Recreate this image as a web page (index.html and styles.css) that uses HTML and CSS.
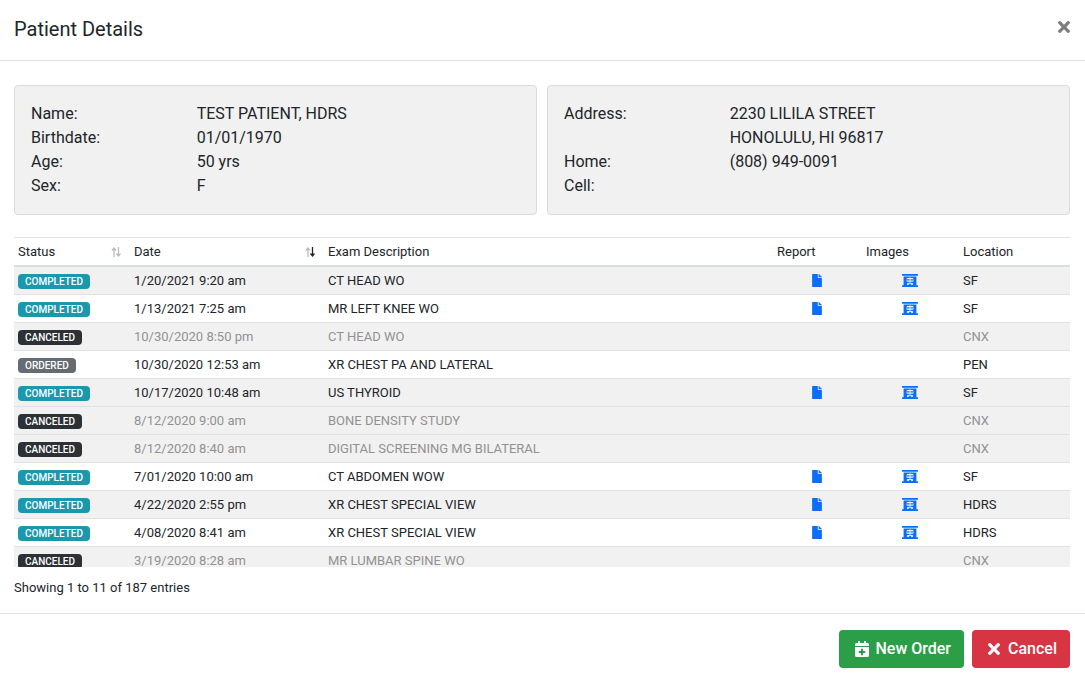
FILE: index.html
```html
<!DOCTYPE html>
<html lang="en">
<head>
<meta charset="utf-8">
<meta name="viewport" content="width=device-width, initial-scale=1">
<title>Patient Details</title>
<link rel="stylesheet" href="styles.css">
</head>
<body>
<svg class="sprite" aria-hidden="true">
  <symbol id="file" viewBox="0 0 384 512"><path d="M224 136V0H24C10.7 0 0 10.7 0 24v464c0 13.3 10.7 24 24 24h336c13.3 0 24-10.7 24-24V160H248c-13.2 0-24-10.8-24-24zm160-14.1v6.1H256V0h6.1c6.4 0 12.5 2.5 17 7l97.9 98c4.5 4.5 7 10.6 7 16.9z"/></symbol>
  <symbol id="xray" viewBox="0 0 640 512"><path d="M16 0h608c8.800 0 16 7.200 16 16v32c0 8.800-7.200 16-16 16H16C7.200 64 0 56.800 0 48V16C0 7.200 7.200 0 16 0z"/><path d="M240 384c-8.800 0-16 7.200-16 16s7.200 16 16 16 16-7.200 16-16-7.200-16-16-16zm160 32c8.800 0 16-7.200 16-16s-7.200-16-16-16-16 7.200-16 16 7.200 16 16 16zM624 448h-48V96H64v352H16c-8.800 0-16 7.200-16 16v32c0 8.800 7.200 16 16 16h608c8.800 0 16-7.200 16-16v-32c0-8.800-7.200-16-16-16zM480 248c0 4.400-3.600 8-8 8H336v32h104c4.400 0 8 3.600 8 8v16c0 4.400-3.600 8-8 8H336v32h64c26.500 0 48 21.500 48 48s-21.500 48-48 48-48-21.500-48-48v-16h-64v16c0 26.500-21.500 48-48 48s-48-21.500-48-48 21.500-48 48-48h64v-32H200c-4.400 0-8-3.600-8-8v-16c0-4.400 3.600-8 8-8h104v-32H168c-4.400 0-8-3.600-8-8v-16c0-4.400 3.600-8 8-8h136v-32H200c-4.400 0-8-3.600-8-8v-16c0-4.400 3.600-8 8-8h104v-24c0-4.400 3.600-8 8-8h16c4.400 0 8 3.600 8 8v24h104c4.400 0 8 3.600 8 8v16c0 4.400-3.600 8-8 8H336v32h136c4.400 0 8 3.600 8 8v16z" fill-rule="evenodd"/></symbol>
  <symbol id="calendar-plus" viewBox="0 0 448 512"><path d="M436 160H12c-6.600 0-12-5.400-12-12v-36c0-26.500 21.500-48 48-48h48V12c0-6.600 5.400-12 12-12h40c6.600 0 12 5.400 12 12v52h128V12c0-6.600 5.400-12 12-12h40c6.600 0 12 5.400 12 12v52h48c26.500 0 48 21.500 48 48v36c0 6.600-5.400 12-12 12zM12 192h424c6.600 0 12 5.400 12 12v260c0 26.500-21.500 48-48 48H48c-26.500 0-48-21.500-48-48V204c0-6.600 5.400-12 12-12zm316 140c0-6.600-5.400-12-12-12h-60v-60c0-6.600-5.400-12-12-12h-40c-6.600 0-12 5.400-12 12v60h-60c-6.600 0-12 5.400-12 12v40c0 6.600 5.400 12 12 12h60v60c0 6.600 5.400 12 12 12h40c6.600 0 12-5.400 12-12v-60h60c6.600 0 12-5.400 12-12v-40z"/></symbol>
  <symbol id="times" viewBox="0 0 352 512"><path d="M242.720 256l100.070-100.070c12.280-12.280 12.280-32.190 0-44.480l-22.240-22.240c-12.280-12.280-32.190-12.280-44.480 0L176 189.280 75.930 89.210c-12.280-12.280-32.190-12.280-44.480 0L9.210 111.450c-12.280 12.280-12.280 32.190 0 44.480L109.280 256 9.210 356.070c-12.280 12.280-12.280 32.190 0 44.480l22.240 22.240c12.280 12.280 32.200 12.280 44.480 0L176 322.720l100.070 100.070c12.280 12.280 32.200 12.280 44.480 0l22.240-22.240c12.280-12.280 12.280-32.190 0-44.480L242.720 256z"/></symbol>
  <symbol id="sort" viewBox="0 0 10 10"><path class="sort-up" d="M3 10V1M1 3.500 3 1l2 2.500"/><path class="sort-down" d="M7.500 0v9M5.500 6.500l2 2.500 2-2.500"/></symbol>
</svg>
<div class="modal" role="dialog" aria-labelledby="title">
  <header class="modal-header">
    <h1 id="title" class="modal-title">Patient Details</h1>
    <button class="close" type="button" aria-label="Close"><svg class="icon-times"><use href="#times"/></svg></button>
  </header>
  <main class="modal-body">
    <div class="cards">
      <dl class="card">
        <dt>Name:</dt><dd>TEST PATIENT, HDRS</dd>
        <dt>Birthdate:</dt><dd>01/01/1970</dd>
        <dt>Age:</dt><dd>50 yrs</dd>
        <dt>Sex:</dt><dd>F</dd>
      </dl>
      <dl class="card">
        <dt>Address:</dt><dd>2230 LILILA STREET<br>HONOLULU, HI 96817</dd>
        <dt>Home:</dt><dd>(808) 949-0091</dd>
        <dt>Cell:</dt><dd></dd>
      </dl>
    </div>
    <div class="exams-scroll">
      <table class="exams">
        <colgroup><col class="col-status"><col class="col-date"><col><col class="col-report"><col class="col-images"><col class="col-location"></colgroup>
        <thead>
          <tr>
            <th><button class="sorter" type="button">Status<svg class="icon-sort"><use href="#sort"/></svg></button></th>
            <th><button class="sorter sorted-desc" type="button">Date<svg class="icon-sort"><use href="#sort"/></svg></button></th>
            <th>Exam Description</th><th>Report</th><th>Images</th><th>Location</th>
          </tr>
        </thead>
        <tbody>
          <tr><td><span class="badge completed">COMPLETED</span></td><td>1/20/2021 9:20 am</td><td>CT HEAD WO</td><td class="link-cell"><a href="#report" aria-label="Report"><svg class="icon-file"><use href="#file"/></svg></a></td><td class="link-cell"><a href="#images" aria-label="Images"><svg class="icon-xray"><use href="#xray"/></svg></a></td><td>SF</td></tr>
          <tr><td><span class="badge completed">COMPLETED</span></td><td>1/13/2021 7:25 am</td><td>MR LEFT KNEE WO</td><td class="link-cell"><a href="#report" aria-label="Report"><svg class="icon-file"><use href="#file"/></svg></a></td><td class="link-cell"><a href="#images" aria-label="Images"><svg class="icon-xray"><use href="#xray"/></svg></a></td><td>SF</td></tr>
          <tr class="inactive"><td><span class="badge canceled">CANCELED</span></td><td>10/30/2020 8:50 pm</td><td>CT HEAD WO</td><td></td><td></td><td>CNX</td></tr>
          <tr><td><span class="badge ordered">ORDERED</span></td><td>10/30/2020 12:53 am</td><td>XR CHEST PA AND LATERAL</td><td></td><td></td><td>PEN</td></tr>
          <tr><td><span class="badge completed">COMPLETED</span></td><td>10/17/2020 10:48 am</td><td>US THYROID</td><td class="link-cell"><a href="#report" aria-label="Report"><svg class="icon-file"><use href="#file"/></svg></a></td><td class="link-cell"><a href="#images" aria-label="Images"><svg class="icon-xray"><use href="#xray"/></svg></a></td><td>SF</td></tr>
          <tr class="inactive"><td><span class="badge canceled">CANCELED</span></td><td>8/12/2020 9:00 am</td><td>BONE DENSITY STUDY</td><td></td><td></td><td>CNX</td></tr>
          <tr class="inactive"><td><span class="badge canceled">CANCELED</span></td><td>8/12/2020 8:40 am</td><td>DIGITAL SCREENING MG BILATERAL</td><td></td><td></td><td>CNX</td></tr>
          <tr><td><span class="badge completed">COMPLETED</span></td><td>7/01/2020 10:00 am</td><td>CT ABDOMEN WOW</td><td class="link-cell"><a href="#report" aria-label="Report"><svg class="icon-file"><use href="#file"/></svg></a></td><td class="link-cell"><a href="#images" aria-label="Images"><svg class="icon-xray"><use href="#xray"/></svg></a></td><td>SF</td></tr>
          <tr><td><span class="badge completed">COMPLETED</span></td><td>4/22/2020 2:55 pm</td><td>XR CHEST SPECIAL VIEW</td><td class="link-cell"><a href="#report" aria-label="Report"><svg class="icon-file"><use href="#file"/></svg></a></td><td class="link-cell"><a href="#images" aria-label="Images"><svg class="icon-xray"><use href="#xray"/></svg></a></td><td>HDRS</td></tr>
          <tr><td><span class="badge completed">COMPLETED</span></td><td>4/08/2020 8:41 am</td><td>XR CHEST SPECIAL VIEW</td><td class="link-cell"><a href="#report" aria-label="Report"><svg class="icon-file"><use href="#file"/></svg></a></td><td class="link-cell"><a href="#images" aria-label="Images"><svg class="icon-xray"><use href="#xray"/></svg></a></td><td>HDRS</td></tr>
          <tr class="inactive"><td><span class="badge canceled">CANCELED</span></td><td>3/19/2020 8:28 am</td><td>MR LUMBAR SPINE WO</td><td></td><td></td><td>CNX</td></tr>
        </tbody>
      </table>
    </div>
    <p class="summary">Showing 1 to 11 of 187 entries</p>
  </main>
  <footer class="modal-footer">
    <button class="btn btn-new" type="button"><svg class="icon-calendar"><use href="#calendar-plus"/></svg>New Order</button>
    <button class="btn btn-cancel" type="button"><svg class="icon-times"><use href="#times"/></svg>Cancel</button>
  </footer>
</div>
</body>
</html>
```
FILE: styles.css
```css
* { box-sizing: border-box; }

body {
  margin: 0;
  background: #fff;
  color: #212529;
  font: 16px/24px Roboto, "Liberation Sans", sans-serif;
}

button { font: inherit; color: inherit; cursor: pointer; }
svg { display: block; fill: currentColor; }
.sprite { position: absolute; width: 0; height: 0; }

.modal-header {
  display: flex;
  justify-content: space-between;
  align-items: flex-start;
  padding: 14px 14px 16px;
  border-bottom: 1px solid #dee2e6;
}
.modal-title { margin: 0; font-size: 20px; line-height: 30px; font-weight: 400; }
.close { padding: 4px 1px; border: 0; background: none; color: #7f7f7f; }
.icon-times { width: 12px; height: 18px; }

.modal-body { padding: 24px 15px 15px 14px; }

.cards { display: grid; grid-template-columns: 1fr 1fr; gap: 10px; }
.card {
  display: grid;
  grid-template-columns: 1fr 2fr;
  align-content: start;
  margin: 0;
  padding: 16px;
  padding-right: 8px;
  border: 1px solid #d6dce1;
  border-radius: 4px;
  background: #f1f1f1;
}
.card dd { margin: 0; }

.exams-scroll { max-height: 330px; margin-top: 22px; overflow: hidden; }
.exams {
  width: 100%;
  table-layout: fixed;
  border-collapse: separate;
  border-spacing: 0;
  font-size: 13px;
  line-height: 19px;
}
.col-status { width: 116px; }
.col-date { width: 194px; }
.col-report { width: 89px; }
.col-images { width: 97px; }
.col-location { width: 111px; }

.exams th {
  height: 30px;
  padding: 4px;
  border-top: 1px solid #dee2e6;
  border-bottom: 2px solid #d8dde1;
  text-align: left;
  font-weight: 400;
}
.exams td { height: 28px; padding: 4px; border-bottom: 1px solid #dee2e6; }
.exams tbody tr:nth-child(odd), .exams .inactive { background: #f1f1f1; }
.inactive { color: #919191; }

.sorter {
  display: flex;
  justify-content: space-between;
  align-items: center;
  width: 100%;
  padding: 0 5px 0 0;
  border: 0;
  background: none;
}
.icon-sort { width: 10px; height: 10px; fill: none; stroke: #bcbcbc; stroke-width: 1.3; }
.sorted-desc { --down: #212529; }
.sort-down { stroke: var(--down, #bcbcbc); }

.badge {
  display: block;
  width: fit-content;
  margin-top: 2px;
  padding: 0 7px;
  border-radius: 4px;
  color: #fff;
  font-size: 10px;
  line-height: 15px;
  font-weight: 500;
}
.completed { background: #1b98ae; }
.canceled { background: #2c3136; }
.ordered { background: #636b73; }

.exams .link-cell { padding-right: 6px; }
.link-cell a { display: flex; justify-content: center; color: #0a6efb; }
.icon-file { width: 10px; height: 13px; }
.icon-xray { width: 16px; height: 13px; }

.summary { margin: 11px 0 0; font-size: 13px; line-height: 20px; }

.modal-footer {
  display: flex;
  justify-content: flex-end;
  gap: 8px;
  padding: 16px 15px 14px;
  border-top: 1px solid #dee2e6;
}
.btn {
  display: flex;
  align-items: center;
  gap: 6px;
  height: 38px;
  padding: 0 13px 0 16px;
  border: 0;
  border-radius: 4px;
  color: #fff;
  font-weight: 500;
}
.btn-new { background: #2a9f47; }
.btn-cancel { gap: 8px; background: #d73444; }
.icon-calendar { width: 14px; height: 16px; }
```
